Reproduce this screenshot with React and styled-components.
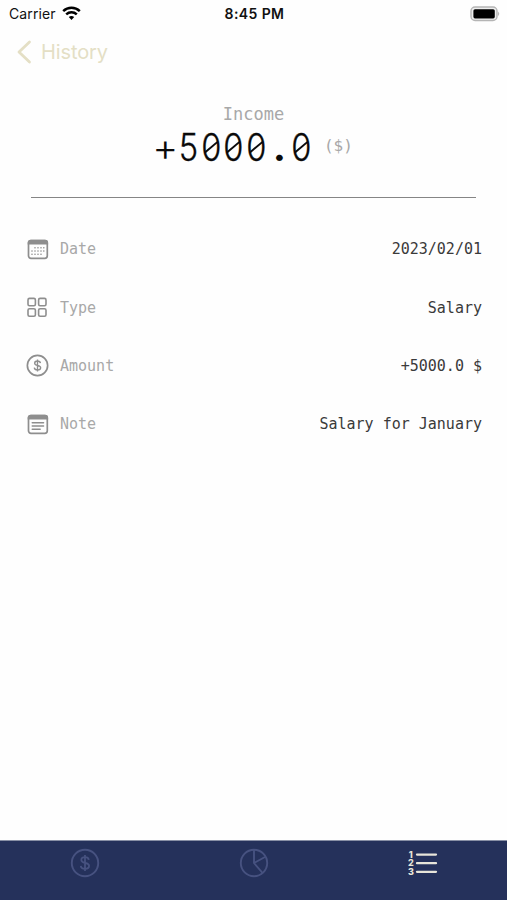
import styled, { createGlobalStyle, css } from 'styled-components'

const GlobalStyle = createGlobalStyle`
  * {
    box-sizing: border-box;
  }
  body {
    margin: 0;
    background: #fefefe;
    font-family: Inter, "Liberation Sans", sans-serif;
  }
`;

const mono = css`
  font-family: "DejaVu Sans Mono", "Liberation Mono", monospace;
`;

const Screen = styled.div`
  width: 507px;
  height: 900px;
  display: flex;
  flex-direction: column;
  overflow: hidden;
`;

const StatusBar = styled.header`
  height: 28px;
  display: grid;
  grid-template-columns: 1fr auto 1fr;
  align-items: center;
  padding: 0 7px 1px 9px;
  color: #111;
  font-size: 14px;
  line-height: 16px;
`;

const Carrier = styled.div`
  display: flex;
  align-items: center;
  gap: 6px;
  letter-spacing: 0.1px;
`;

const Time = styled.div`
  font-weight: 600;
  letter-spacing: 0.4px;
`;

const Battery = styled.svg`
  justify-self: end;
`;

const BackLink = styled.nav`
  height: 48px;
  display: flex;
  align-items: center;
  gap: 9px;
  padding-left: 17px;
  color: #e4dfc5;
  font-size: 20px;
  letter-spacing: -0.1px;
`;

const Summary = styled.section`
  height: 122px;
  margin: 0 31px;
  padding-top: 28px;
  border-bottom: 1px solid #858585;
`;

const Kind = styled.div`
  ${mono}
  text-align: center;
  color: #a8a8a8;
  font-size: 17px;
  line-height: 20px;
`;

const Total = styled.div`
  display: flex;
  align-items: center;
  justify-content: center;
  gap: 11px;
  height: 46px;
`;

const TotalValue = styled.div`
  display: flex;
  color: #0a0a0a;
  font-size: 38px;
  font-weight: 300;
`;

// One fixed-width cell per character, zeros get a slash inside the bowl
const Figure = styled.span`
  position: relative;
  display: flex;
  justify-content: center;
  width: 22.7px;
  font-weight: ${(props) => (props.$point ? 700 : 300)};
  transform: scaleX(${(props) => (props.$narrow ? 0.86 : 1.05)});
  -webkit-text-stroke: ${(props) => (props.$narrow ? '0.3px #0a0a0a' : '0')};
  ${(props) => props.$zero && css`
    &::after {
      content: '';
      position: absolute;
      left: 2px;
      top: 22px;
      width: 19px;
      height: 2.4px;
      background: #0a0a0a;
      transform: rotate(-36deg);
    }
  `}
`;

const Currency = styled.div`
  ${mono}
  color: #a8a8a8;
  font-size: 16px;
  line-height: 20px;
  padding-bottom: 2px;
`;

const Details = styled.main`
  flex: 1;
  padding: 22px 25px 0 26px;
`;

const Row = styled.div`
  height: 58.4px;
  display: flex;
  align-items: center;
  gap: 11px;
`;

const RowIcon = styled.div`
  display: flex;
  width: 23px;
  color: #8e8e8e;
`;

const Label = styled.div`
  ${mono}
  flex: 1;
  color: #a8a8a8;
  font-size: 15px;
`;

const Value = styled.div`
  ${mono}
  color: #3a3a3a;
  font-size: 15px;
`;

const TabBar = styled.footer`
  height: 60px;
  display: grid;
  grid-template-columns: repeat(3, 1fr);
  background: #25315b;
  border-top: 1px solid #8990a6;
`;

const Tab = styled.div`
  display: flex;
  justify-content: center;
  padding-top: 7px;
  color: ${(props) => (props.$active ? '#e8e5da' : '#475280')};
`;

const Wifi = () => (
  <svg width="19" height="15" viewBox="0 0 19 15" fill="none" stroke="#000" strokeWidth="2.5">
    <path d="M1.2 5.2C5.9.7 13.1.7 17.8 5.2" />
    <path d="M4.2 8.4c3-2.8 7.6-2.8 10.6 0" />
    <path d="M6.8 10.9c1.6-1.2 3.8-1.2 5.4 0L9.5 14z" fill="#000" stroke="none" />
  </svg>
)

const dots = [
  [9, 9.8], [12, 9.8], [15, 9.8], [17.8, 9.8],
  [6, 13], [9, 13], [12, 13], [15, 13], [17.8, 13],
  [6, 16.2], [9, 16.2], [12, 16.2], [15, 16.2],
]

const CalendarIcon = () => (
  <svg width="23" height="23" viewBox="0 0 23 23" fill="#8e8e8e">
    <rect x="2.5" y="2.5" width="18.8" height="17.8" rx="2.5" fill="none" stroke="#8e8e8e" strokeWidth="1.7" />
    <path d="M1.7 6.4V4.6q0-2.9 3-2.9h14.4q3 0 3 2.9v1.8z" />
    {dots.map(([x, y]) => (
      <rect key={`${x}-${y}`} x={x - 0.7} y={y - 0.7} width="1.4" height="1.4" rx=".4" />
    ))}
  </svg>
)

const NoteIcon = () => (
  <svg width="23" height="23" viewBox="0 0 23 23" fill="#8e8e8e">
    <rect x="2.5" y="2.5" width="18.8" height="17.8" rx="2.5" fill="none" stroke="#8e8e8e" strokeWidth="1.7" />
    <path d="M1.7 6.4V4.6q0-2.9 3-2.9h14.4q3 0 3 2.9v1.8z" />
    <path d="M6.2 9.8h11.4M6.2 13h11.4M6.2 16.2h8" stroke="#8e8e8e" strokeWidth="1.4" strokeLinecap="round" />
  </svg>
)

const GridIcon = () => (
  <svg width="22" height="22" viewBox="0 0 22 22" fill="none" stroke="#8e8e8e" strokeWidth="1.6">
    <rect x="2" y="1.4" width="7.4" height="7.4" rx="1.5" />
    <rect x="12.6" y="1.4" width="7.4" height="7.4" rx="1.5" />
    <rect x="2" y="11.8" width="7.4" height="7.4" rx="1.5" />
    <rect x="12.6" y="11.8" width="7.4" height="7.4" rx="1.5" />
  </svg>
)

const DollarIcon = ({ size, stroke }) => (
  <svg width={size} height={size} viewBox="0 0 22 22" fill="none" stroke="currentColor" strokeWidth={stroke}>
    <circle cx="11" cy="11" r="9.7" />
    <path d="M13.8 8.7c-.2-1.3-1.3-2-2.8-2s-2.7.8-2.7 2.1c0 3 5.7 1.2 5.7 4.3 0 1.3-1.2 2.2-3 2.2s-2.9-.8-3.1-2.2M11 5.2v11.6" strokeWidth="1.3" />
  </svg>
)

const PieIcon = () => (
  <svg width="30" height="30" viewBox="0 0 30 30" fill="none" stroke="currentColor" strokeWidth="1.9">
    <circle cx="15" cy="15" r="13.2" />
    <path d="M15 2v13l8.6 10M15 15l11-6" />
  </svg>
)

const Numerals = styled.text`
  font: 800 9px Inter, "Liberation Sans", sans-serif;
`;

const ListIcon = () => (
  <svg width="30" height="30" viewBox="0 0 30 30" fill="currentColor">
    <Numerals>
      <tspan x="0.8" y="9.8">1</tspan>
      <tspan x="0" y="18.4">2</tspan>
      <tspan x="0" y="27">3</tspan>
    </Numerals>
    <path d="M9 6.6h19M9 15.2h19M9 23.8h19" stroke="currentColor" strokeWidth="2.3" strokeLinecap="round" />
  </svg>
)

const rows = [
  { label: 'Date', value: '2023/02/01', icon: <CalendarIcon /> },
  { label: 'Type', value: 'Salary', icon: <GridIcon /> },
  { label: 'Amount', value: '+5000.0 $', icon: <DollarIcon size={23} stroke={1.6} /> },
  { label: 'Note', value: 'Salary for January', icon: <NoteIcon /> },
]

const App = () => {
  return <Screen>
    <GlobalStyle />
    <StatusBar>
      <Carrier>Carrier <Wifi /></Carrier>
      <Time>8:45 PM</Time>
      <Battery width="30" height="16" viewBox="0 0 30 16">
        <rect x="1" y="1" width="26" height="13.5" rx="4" fill="#eee" stroke="#b5b5b5" strokeWidth="1.4" />
        <rect x="3.4" y="3.2" width="21.4" height="9.2" rx="1.6" fill="#000" />
        <path d="M28.2 5.5q2 2.3 0 4.6z" fill="#aaa" />
      </Battery>
    </StatusBar>
    <BackLink>
      <svg width="15" height="24" viewBox="0 0 15 24" fill="none" stroke="currentColor" strokeWidth="2.8" strokeLinecap="round" strokeLinejoin="round">
        <path d="M12.5 2 2 12l10.5 10" />
      </svg>
      History
    </BackLink>
    <Summary>
      <Kind>Income</Kind>
      <Total>
        <TotalValue>
          {'+5000.0'.split('').map((char, i) => (
            <Figure key={i} $zero={char === '0'} $point={char === '.'} $narrow={/\d/.test(char)}>{char}</Figure>
          ))}
        </TotalValue>
        <Currency>($)</Currency>
      </Total>
    </Summary>
    <Details>
      {rows.map((row) => (
        <Row key={row.label}>
          <RowIcon>{row.icon}</RowIcon>
          <Label>{row.label}</Label>
          <Value>{row.value}</Value>
        </Row>
      ))}
    </Details>
    <TabBar>
      <Tab><DollarIcon size={30} stroke={1.4} /></Tab>
      <Tab><PieIcon /></Tab>
      <Tab $active><ListIcon /></Tab>
    </TabBar>
  </Screen>
}

export default App
